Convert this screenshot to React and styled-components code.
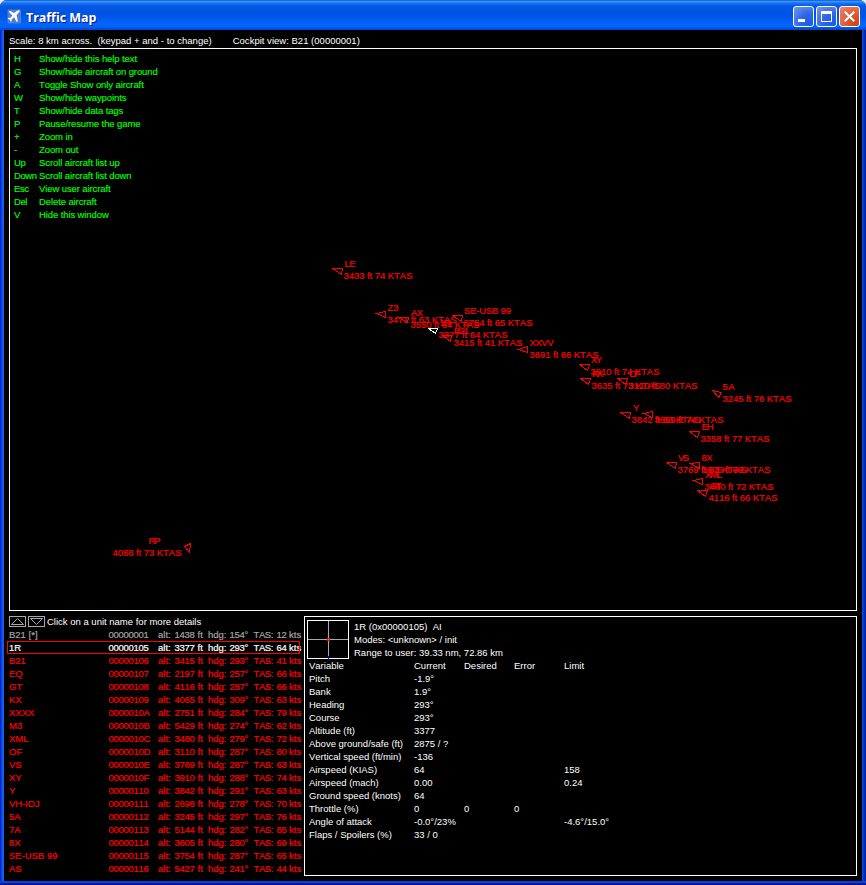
import React from "react";
import styled, { createGlobalStyle } from "styled-components";

const Global = createGlobalStyle`
  * { box-sizing: border-box; }
  body { margin: 0; background: #e4ecf8; overflow: hidden; }
`;

const Window = styled.div`
  width: 866px;
  height: 885px;
  display: flex;
  flex-direction: column;
  padding: 0 4px 4px;
  border-radius: 7px 7px 0 0;
  background: linear-gradient(90deg, #0019cf 0, #0831d9 1px, #166aee 3px, #0855dd 4px, #0855dd 862px, #0441d8 863px, #0029b5 865px, #00138c 866px);
  font-family: "Liberation Sans", Arial, sans-serif;
  font-size: 9.5px;
  font-kerning: none;
  line-height: 13px;
  color: #fff;
  white-space: pre;
  box-shadow: inset 0 -1px #00138c, inset 0 -2px #0020a8, inset 0 -4px #0841de;
`;

const TitleBar = styled.header`
  flex: none;
  height: 30px;
  margin: 0 -4px;
  padding: 3px 6px 0 7px;
  display: flex;
  align-items: center;
  border-radius: 7px 7px 0 0;
  background: linear-gradient(180deg, #0958c8 0, #3a93ff 1.5px, #1a74f0 3px, #0458e4 6px, #0054e3 12px, #0056e8 17px, #0364fb 23px, #0266ff 26px, #0058ea 28px, #0044c8 30px);
`;

const Title = styled.h1`
  flex: 1;
  margin: 0 0 0 4px;
  padding-top: 2px;
  font: 700 12.5px/20px "Open Sans", "Noto Sans", sans-serif;
  letter-spacing: -0.05px;
  text-shadow: 1px 1px #0a1883;
`;

const Controls = styled.div`
  display: flex;
  gap: 2px;
`;

const ControlButton = styled.button`
  width: 21px;
  height: 21px;
  padding: 0;
  border: 1px solid #fff;
  border-radius: 3px;
  background: ${(p) =>
    p.$close
      ? "radial-gradient(circle at 85% 90%, #cc4410 0, #e05a35 45%, #e9886c 100%)"
      : "radial-gradient(circle at 85% 90%, #1a5ce0 0, #2f66e6 45%, #7697ee 100%)"};
  svg { display: block; }
`;

const Client = styled.main`
  flex: 1;
  min-height: 0;
  display: flex;
  flex-direction: column;
  padding: 4px 5px 5px;
  background: #000;
`;

const Status = styled.div`
  height: 14px;
  display: flex;
  gap: 21px;
  letter-spacing: 0.015px;
`;

const MapFrame = styled.section`
  height: 563px;
  border: 1px solid #fff;
  position: relative;
`;

const MapCanvas = styled.svg`
  display: block;
  position: absolute;
  inset: 0;
  font-size: 9.5px;
  text { stroke: #f00; stroke-width: 0.2px; }
`;

const HelpList = styled.dl`
  position: relative;
  margin: 0;
  padding: 3px 4px;
  display: grid;
  grid-template-columns: 25px auto;
  grid-auto-rows: 13px;
  color: #0f0;
  letter-spacing: -0.1px;
  -webkit-text-stroke: 0.15px #0f0;
  dt, dd { margin: 0; }
  dt { letter-spacing: -0.4px; }
`;

const Bottom = styled.div`
  margin-top: 4px;
  flex: 1;
  display: grid;
  grid-template-columns: 295px 553px;
`;

const UnitPanel = styled.section``;

const ListHeader = styled.div`
  height: 13px;
  display: flex;
  gap: 2px;
`;

const ScrollButton = styled.button`
  width: 17px;
  height: 11px;
  margin-top: 1px;
  padding: 0;
  background: #000;
  border: 1px solid #aaa;
  svg { display: block; }
`;

const UnitRow = styled.div`
  height: 13px;
  margin-left: -2px;
  width: 293px;
  display: grid;
  grid-template-columns: 99.5px 49.5px 16.5px 23px 10.5px 21.5px 24px 23px 12.5px 16px;
  padding-left: 2px;
  color: ${(p) => p.$color};
  -webkit-text-stroke: 0.2px ${(p) => p.$color};
  outline: ${(p) => (p.$selected ? "1px solid #f00" : "none")};
  outline-offset: -1px;
`;

const Digits = styled.span`
  letter-spacing: -0.28px;
`;

const Tas = styled.span`
  letter-spacing: -0.4px;
`;

const DetailPanel = styled.section`
  border: 1px solid #fff;
  height: 260px;
  margin-top: 1px;
  padding: 3px 2px;
`;

const DetailHead = styled.div`
  display: flex;
  gap: 5px;
  height: 39px;
  svg { flex: none; }
`;

const Variables = styled.div`
  position: relative;
  display: grid;
  grid-template-columns: 105px 50px 50px 50px auto;
  grid-auto-rows: 13px;
  padding-left: 2px;
`;

const HELP = [
  ["H", "Show/hide this help text"],
  ["G", "Show/hide aircraft on ground"],
  ["A", "Toggle Show only aircraft"],
  ["W", "Show/hide waypoints"],
  ["T", "Show/hide data tags"],
  ["P", "Pause/resume the game"],
  ["+", "Zoom in"],
  ["-", "Zoom out"],
  ["Up", "Scroll aircraft list up"],
  ["Down", "Scroll aircraft list down"],
  ["Esc", "View user aircraft"],
  ["Del", "Delete aircraft"],
  ["V", "Hide this window"],
];

const UNITS = [
  ["B21 [*]", "00000001", "1438", "154°", "12"],
  ["1R", "00000105", "3377", "293°", "64"],
  ["B21", "00000106", "3415", "293°", "41"],
  ["EQ", "00000107", "2197", "257°", "66"],
  ["GT", "00000108", "4116", "287°", "66"],
  ["KX", "00000109", "4065", "309°", "63"],
  ["XXXX", "0000010A", "2751", "284°", "79"],
  ["M3", "0000010B", "5429", "274°", "62"],
  ["XML", "0000010C", "3480", "279°", "72"],
  ["OF", "0000010D", "3110", "287°", "80"],
  ["VS", "0000010E", "3769", "287°", "63"],
  ["XY", "0000010F", "3910", "288°", "74"],
  ["Y", "00000110", "3842", "291°", "63"],
  ["VH-IDJ", "00000111", "2698", "278°", "70"],
  ["5A", "00000112", "3245", "297°", "76"],
  ["7A", "00000113", "5144", "282°", "85"],
  ["8X", "00000114", "3605", "280°", "69"],
  ["SE-USB 99", "00000115", "3754", "287°", "65"],
  ["AS", "00000116", "5427", "241°", "44"],
];

const VARIABLES = [
  ["Variable", "Current", "Desired", "Error", "Limit"],
  ["Pitch", "-1.9°"],
  ["Bank", "1.9°"],
  ["Heading", "293°"],
  ["Course", "293°"],
  ["Altitude (ft)", "3377"],
  ["Above ground/safe (ft)", "2875 / ?"],
  ["Vertical speed (ft/min)", "-136"],
  ["Airspeed (KIAS)", "64", "", "", "158"],
  ["Airspeed (mach)", "0.00", "", "", "0.24"],
  ["Ground speed (knots)", "64"],
  ["Throttle (%)", "0", "0", "0"],
  ["Angle of attack", "-0.0°/23%", "", "", "-4.6°/15.0°"],
  ["Flaps / Spoilers (%)", "33 / 0"],
];

// name, name x/y, tag, tag x/y, marker points, name width
const AIRCRAFT = [
  ["LE", 344.5, 264, "3433 ft 74 KTAS", 343.5, 276, "332.5,268.5 342.5,268.5 341.5,274.5", 11],
  ["Z3", 387.5, 308, "3471 ft 63 KTAS", 387.5, 320, "376.5,313.5 385.5,311.5 385.5,317.5", 11],
  ["AX", 411, 313, "3550 ft 64 KTAS", 410.5, 325, "398.5,317.5 408.5,317.5 407.5,322.5", 12],
  ["SE-USB 99", 464, 311, "3754 ft 65 KTAS", 463.5, 323, "452.5,315.5 462.5,315.5 461.5,321.5", 47],
  ["1R", 440, 323, "3377 ft 64 KTAS", 438.5, 335, "428.5,328.5 437.5,328.5 435.5,333.5", 11],
  ["B21", 454, 331, "3415 ft 41 KTAS", 453.5, 343, "442.5,335.5 451.5,335.5 450.5,341.5", 15],
  ["XXVV", 529.5, 343, "3691 ft 66 KTAS", 529.5, 355, "518.5,349.5 527.5,346.5 527.5,352.5", 24],
  ["XY", 591, 360, "3910 ft 74 KTAS", 590.5, 372, "579.5,364.5 589.5,364.5 587.5,370.5", 11],
  ["KX", 592, 374, "3635 ft 73 KTAS", 591.5, 386, "580.5,378.5 590.5,378.5 588.5,384.5", 11],
  ["OF", 629, 374, "3110 ft 80 KTAS", 628.5, 386, "617.5,378.5 627.5,378.5 625.5,384.5", 11],
  ["5A", 722.5, 387, "3245 ft 76 KTAS", 722.5, 399, "712.5,390.5 721.5,392.5 718.5,397.5", 12],
  ["Y", 633, 408, "3842 ft 63 KTAS", 631.5, 420, "620.5,412.5 630.5,412.5 629.5,418.5", 5],
  ["", 654, 408, "3659 ft 74 KTAS", 654.5, 420, "643.5,413.5 652.5,411.5 652.5,417.5", 5],
  ["EH", 701.5, 427, "3358 ft 77 KTAS", 700.5, 439, "689.5,431.5 699.5,431.5 697.5,437.5", 12],
  ["VS", 678, 458, "3769 ft 63 KTAS", 677.5, 470, "666.5,462.5 676.5,462.5 675.5,468.5", 11],
  ["8X", 701.5, 458, "3605 ft 69 KTAS", 701.5, 470, "690.5,463.5 699.5,462.5 699.5,468.5", 11],
  ["XML", 705, 475, "3480 ft 72 KTAS", 704.5, 487, "693.5,480.5 702.5,478.5 702.5,484.5", 17],
  ["GT", 709.5, 486, "4116 ft 66 KTAS", 708.5, 498, "697.5,490.5 707.5,490.5 705.5,496.5", 12],
  ["RP", 148.5, 541, "4088 ft 73 KTAS", 112.5, 553, "184.5,546.5 190.5,543.5 189.5,552.5", 12],
];

function unitColor(i) {
  if (i === 0) return "#a4a4a4";
  return i === 1 ? "#fff" : "#f00";
}

export default function App() {
  return (
    <>
      <Global />
      <Window>
        <TitleBar>
          <svg width="15" height="15" viewBox="0 0 15 15">
            <rect x="0.5" y="0.5" width="13.5" height="14" rx="1" fill="#4a80d2" />
            <path d="M1.5 2.5l1.5-.7 4 2.2 4-2.7 1.8.2-.4 1.6-2.8 3 1.2 6-1.2.8-2.5-4.7-2.6 2.2.1 1.8-.9.8-.9-2.3-2.2-1 .8-.9 1.8.2 2.2-2.5z" fill="#fff" />
          </svg>
          <Title>Traffic Map</Title>
          <Controls>
            <ControlButton aria-label="Minimize">
              <svg width="19" height="19"><rect x="4" y="12" width="7" height="3" fill="#fff" /></svg>
            </ControlButton>
            <ControlButton aria-label="Maximize">
              <svg width="19" height="19">
                <path d="M4.5 4.5h10v10h-10z" fill="none" stroke="#fff" />
                <rect x="4" y="4" width="11" height="3" fill="#fff" />
              </svg>
            </ControlButton>
            <ControlButton aria-label="Close" $close>
              <svg width="19" height="19"><path d="M4.7 4.7l9.6 9.6M14.3 4.7l-9.6 9.6" stroke="#fff" strokeWidth="2.1" /></svg>
            </ControlButton>
          </Controls>
        </TitleBar>
        <Client>
          <Status>
            <span>Scale: 8 km across.  (keypad + and - to change)</span>
            <span>Cockpit view: B21 (00000001)</span>
          </Status>
          <MapFrame>
            <MapCanvas width="846" height="561" viewBox="10 49 846 561">
              {AIRCRAFT.map(([name, nx, ny, tag, tx, ty, points, w]) => (
                <g key={tag} fill="#f00">
                  {name && <text x={nx} y={ny + 3} textLength={w}>{name}</text>}
                  <text x={tx} y={ty + 3} textLength="69">{tag}</text>
                  <polygon points={points} fill="none" stroke={name === "1R" ? "#fff" : "#f00"} shapeRendering="crispEdges" />
                </g>
              ))}
            </MapCanvas>
            <HelpList>
              {HELP.map(([key, text]) => (
                <React.Fragment key={key}>
                  <dt>{key}</dt>
                  <dd>{text}</dd>
                </React.Fragment>
              ))}
            </HelpList>
          </MapFrame>
          <Bottom>
            <UnitPanel>
              <ListHeader>
                <ScrollButton aria-label="Scroll up">
                  <svg width="15" height="9"><path d="M1.5 7.5h12l-6-6z" fill="none" stroke="#aaa" /></svg>
                </ScrollButton>
                <ScrollButton aria-label="Scroll down">
                  <svg width="15" height="9"><path d="M1.5 1.5h12l-6 6z" fill="none" stroke="#aaa" /></svg>
                </ScrollButton>
                <span>Click on a unit name for more details</span>
              </ListHeader>
              {UNITS.map(([name, id, alt, hdg, tas], i) => (
                <UnitRow key={id} $color={unitColor(i)} $selected={i === 1}>
                  <span>{name}</span>
                  <Digits>{id}</Digits>
                  <span>alt:</span>
                  <Digits>{alt}</Digits>
                  <span>ft</span>
                  <span>hdg:</span>
                  <Digits>{hdg}</Digits>
                  <Tas>TAS:</Tas>
                  <Digits>{tas}</Digits>
                  <span>kts</span>
                </UnitRow>
              ))}
            </UnitPanel>
            <DetailPanel>
              <DetailHead>
                <svg width="42" height="40" shapeRendering="crispEdges">
                  <path d="M21.5 1v37M1 19.5h40" stroke="#aaa" />
                  <rect x="0.5" y="0.5" width="41" height="38" fill="none" stroke="#fff" />
                  <rect x="20.5" y="18.5" width="2" height="2" fill="none" stroke="#f00" />
                  <path d="M21.5 36v4" stroke="#00f" />
                </svg>
                <div>
                  <div>1R (0x00000105)  AI</div>
                  <div>Modes: &lt;unknown&gt; / init</div>
                  <div>Range to user: 39.33 nm, 72.86 km</div>
                </div>
              </DetailHead>
              <Variables>
                {VARIABLES.flatMap((row) =>
                  [0, 1, 2, 3, 4].map((c) => <span key={row[0] + c}>{row[c] || ""}</span>)
                )}
              </Variables>
            </DetailPanel>
          </Bottom>
        </Client>
      </Window>
    </>
  );
}
